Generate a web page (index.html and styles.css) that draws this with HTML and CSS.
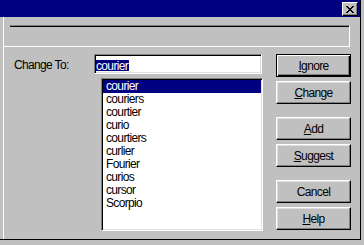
FILE: index.html
```html
<!DOCTYPE html>
<html lang="en">
<head>
    <meta charset="UTF-8">
    <title>Spelling</title>
    <link rel="stylesheet" href="styles.css">
</head>
<body>
    <div class="window">
        <div class="titlebar">
            <span class="close-btn">
                <svg width="8" height="7" viewBox="0 0 8 7" shape-rendering="crispEdges">
                    <path d="M0 0h2v1H0zM6 0h2v1H6zM1 1h2v1H1zM5 1h2v1H5zM2 2h4v1H2zM3 3h2v1H3zM2 4h4v1H2zM1 5h2v1H1zM5 5h2v1H5zM0 6h2v1H0zM6 6h2v1H6z" fill="#000"/>
                </svg>
            </span>
        </div>

        <div class="client">
            <div class="header">
                <div class="header-box"></div>
            </div>

            <div class="main">
                <div class="left">
                    <div class="row">
                        <label for="changeTo">Change To:</label>
                        <div class="field" id="changeTo"><span class="sel">courier</span></div>
                    </div>

                    <ul class="list">
                        <li class="selected">courier</li>
                        <li>couriers</li>
                        <li>courtier</li>
                        <li>curio</li>
                        <li>courtiers</li>
                        <li>curlier</li>
                        <li>Fourier</li>
                        <li>curios</li>
                        <li>cursor</li>
                        <li>Scorpio</li>
                    </ul>
                </div>

                <!-- tombol -->
                <div class="buttons">
                    <button class="default"><u>I</u>gnore</button>
                    <button><u>C</u>hange</button>
                    <button class="spaced"><u>A</u>dd</button>
                    <button><u>S</u>uggest</button>
                    <button class="spaced">Cancel</button>
                    <button><u>H</u>elp</button>
                </div>
            </div>
        </div>
    </div>
</body>
</html>
```

FILE: styles.css
```css
html, body {
    margin: 0;
    padding: 0;
}

body {
    width: 364px;
    height: 245px;
    overflow: hidden;
    background-color: #c0c0c0;
    font-family: "Liberation Sans", Arial, sans-serif;
    font-size: 12px;
    letter-spacing: -0.65px;
    color: #000;
}

.window {
    box-sizing: border-box;
    width: 361px;
    height: 240px;
    border-right: 1px solid #000;
    border-bottom: 1px solid #000;
    display: flex;
    flex-direction: column;
}

.titlebar {
    height: 17px;
    background-color: #000080;
    display: flex;
    justify-content: flex-end;
    align-items: flex-start;
    padding: 2px 2px 0 0;
    box-sizing: border-box;
}

.close-btn {
    box-sizing: border-box;
    width: 16px;
    height: 14px;
    background-color: #c0c0c0;
    border: 1px solid;
    border-color: #fff #000 #000 #fff;
    box-shadow: inset -1px -1px #808080;
    display: flex;
    justify-content: center;
    align-items: center;
}

.close-btn svg {
    display: block;
}

.client {
    flex: 1;
    margin-left: 3px;
    border-left: 1px solid #fff;
}

/* kotak atas */
.header {
    margin: 8px 10px 0 0;
    padding-left: 6px;
    border-bottom: 1px solid #fff;
}

.header-box {
    height: 20px;
    border-top: 1px solid #808080;
    border-right: 1px solid #fff;
    box-shadow: inset 0 1px #000;
}

.main {
    display: flex;
    gap: 13px;
    padding: 7px 0 0 10px;
}

.left {
    width: 249px;
}

.row {
    display: flex;
    align-items: center;
    height: 20px;
}

.row label {
    width: 80px;
    padding-top: 1px;
}

.field {
    box-sizing: border-box;
    width: 168px;
    height: 20px;
    background-color: #fff;
    border: 1px solid;
    border-color: #808080 #fff #fff #808080;
    box-shadow: inset 1px 1px #000, inset -1px -1px #dfdfdf;
    padding: 4px 0 0 1px;
}

.sel {
    display: inline-block;
    background-color: #000080;
    color: #fff;
    line-height: 12px;
    height: 11px;
    padding-right: 1px;
}

.list {
    box-sizing: border-box;
    list-style: none;
    margin: 4px 0 0 87px;
    width: 162px;
    height: 153px;
    padding: 1px;
    background-color: #fff;
    border: 1px solid;
    border-color: #808080 #fff #fff #808080;
    box-shadow: inset 1px 1px #000, inset -1px -1px #dfdfdf;
}

.list li {
    height: 13px;
    line-height: 13px;
    padding-left: 3px;
}

.list li.selected {
    background-color: #000080;
    color: #fff;
}

.buttons {
    display: flex;
    flex-direction: column;
    gap: 4px;
    width: 75px;
}

.buttons button {
    box-sizing: border-box;
    width: 75px;
    height: 23px;
    margin: 0;
    padding: 0;
    font-family: "Liberation Sans", Arial, sans-serif;
    font-size: 12px;
    letter-spacing: -0.65px;
    color: #000;
    background-color: #c0c0c0;
    border: 1px solid;
    border-color: #fff #000 #000 #fff;
    box-shadow: inset -1px -1px #808080, inset 1px 1px #dfdfdf;
}

.buttons button.default {
    border: 1px solid #000;
    box-shadow: inset 1px 1px #fff, inset -1px -1px #000, inset -2px -2px #808080;
}

.buttons button.spaced {
    margin-top: 9px;
}
```
